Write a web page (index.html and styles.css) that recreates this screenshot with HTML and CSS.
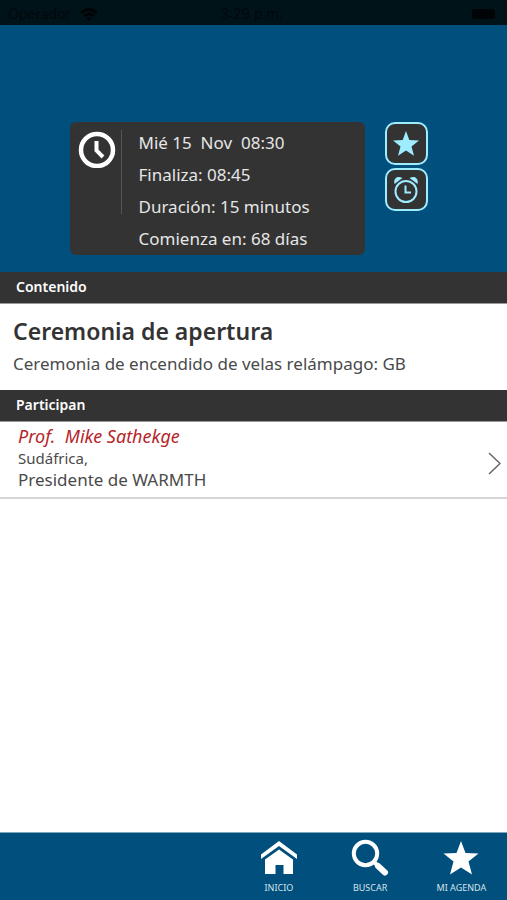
FILE: index.html
```html
<!DOCTYPE html>
<html lang="es">
<head>
  <meta charset="UTF-8">
  <meta name="viewport" content="width=device-width, initial-scale=1.0">
  <title>Ceremonia de apertura</title>
  <link rel="stylesheet" href="styles.css">
</head>
<body>

<div class="status-bar">
  <div class="carrier">
    <span>Operador</span>
    <svg width="20" height="14" viewBox="0 0 20 14" aria-hidden="true">
      <path d="M1 5 Q10 -3 19 5 L17 7 Q10 1 3 7 Z" fill="#000406"/>
      <path d="M4 8 Q10 3 16 8 L14 10 Q10 7 6 10 Z" fill="#000406"/>
      <path d="M7 11 Q10 9 13 11 L10 14 Z" fill="#000406"/>
    </svg>
  </div>
  <span>3:29 p.m.</span>
  <div class="battery-side"><div class="battery"></div></div>
</div>

<header class="hero">
  <div class="time-card">
    <div class="clock">
      <svg width="38" height="38" viewBox="0 0 38 38" aria-hidden="true">
        <circle cx="19" cy="20" r="16" fill="none" stroke="#fff" stroke-width="4.500"/>
        <path d="M18.500 11 V20.500 L25 27" fill="none" stroke="#fff" stroke-width="4"/>
      </svg>
    </div>
    <div class="time-info">
      <p>Mié 15&nbsp; Nov&nbsp; 08:30</p>
      <p>Finaliza: 08:45</p>
      <p>Duración: 15 minutos</p>
      <p>Comienza en: 68 días</p>
    </div>
  </div>
  <div class="actions">
    <button type="button" aria-label="Favorito">
      <svg width="26" height="26" viewBox="0 0 26 26" aria-hidden="true">
        <path d="M13 0 L16.300 9 L26 9.400 L18.500 15.500 L21 24.700 L13 19.500 L5 24.700 L7.500 15.500 L0 9.400 L9.700 9 Z" fill="#9eecff"/>
      </svg>
    </button>
    <button type="button" aria-label="Alarma">
      <svg width="26" height="28" viewBox="0 0 26 28" aria-hidden="true">
        <circle cx="13" cy="15.500" r="10.500" fill="none" stroke="#9eecff" stroke-width="2"/>
        <path d="M12.500 9.500 V16.500 H18" fill="none" stroke="#9eecff" stroke-width="2"/>
        <path d="M1.500 8 C0 2.500 4.500 -1 9.500 2 Z M24.500 8 C26 2.500 21.500 -1 16.500 2 Z" fill="#9eecff"/>
      </svg>
    </button>
  </div>
</header>

<main>
  <h2 class="section-title">Contenido</h2>
  <div class="content">
    <h1>Ceremonia de apertura</h1>
    <p>Ceremonia de encendido de velas relámpago: GB</p>
  </div>

  <h2 class="section-title">Participan</h2>
  <a class="person" href="#">
    <div>
      <p class="name">Prof.&nbsp; Mike Sathekge</p>
      <p class="country">Sudáfrica,</p>
      <p class="role">Presidente de WARMTH</p>
    </div>
    <svg class="chevron" width="13" height="24" viewBox="0 0 13 24" aria-hidden="true">
      <path d="M1 2 L12 12.500 L1 23" fill="none" stroke="#666" stroke-width="1.500"/>
    </svg>
  </a>
</main>

<nav class="tab-bar">
  <a href="#">
    <svg width="38" height="38" viewBox="0 0 38 38" aria-hidden="true">
      <path d="M1 20 V15.500 L19 2 L37 15.500 V20 L19 7 Z" fill="#fff"/>
      <path d="M5 20.500 L19 10.500 L33 20.500 V35 H23.500 V26 H15.500 V35 H5 Z" fill="#fff"/>
    </svg>
    <span>INICIO</span>
  </a>
  <a href="#">
    <svg width="38" height="38" viewBox="0 0 38 38" aria-hidden="true">
      <circle cx="14.500" cy="14.500" r="11.700" fill="none" stroke="#fff" stroke-width="4"/>
      <path d="M22.500 22.500 L27 27" stroke="#fff" stroke-width="4"/>
      <path d="M27 27 L34 33.500" stroke="#fff" stroke-width="6" stroke-linecap="round"/>
    </svg>
    <span>BUSCAR</span>
  </a>
  <a href="#">
    <svg width="38" height="38" viewBox="0 0 38 38" aria-hidden="true">
      <path d="M19 2 L23.500 14 L36.500 14.500 L26.500 22.500 L30 35.500 L19 28.500 L8 35.500 L11.500 22.500 L1.500 14.500 L14.500 14 Z" fill="#fff"/>
    </svg>
    <span>MI AGENDA</span>
  </a>
</nav>

</body>
</html>
```
FILE: styles.css
```css
* {
  box-sizing: border-box;
}
body {
  margin: 0;
  min-height: 100vh;
  display: flex;
  flex-direction: column;
  font-family: "Noto Sans", "Open Sans", sans-serif;
  background-color: #fff;
  color: #4a4a4a;
}
p, h1, h2 {
  margin: 0;
}
svg {
  display: block;
}
.status-bar {
  display: grid;
  grid-template-columns: 1fr auto 1fr;
  align-items: center;
  height: 25px;
  padding: 2px 12px 0 8px;
  background-color: #001318;
  color: #00080b;
  font-family: Inter, sans-serif;
  font-size: 14px;
}
.carrier {
  display: flex;
  align-items: center;
  gap: 8px;
}
.battery-side {
  display: flex;
  justify-content: flex-end;
}
.battery {
  width: 23px;
  height: 10px;
  border-radius: 3px;
  background-color: #000406;
}
.hero {
  display: flex;
  justify-content: center;
  align-items: flex-start;
  gap: 20px;
  padding: 97px 10px 17px 0;
  background-color: #004f7c;
}
.time-card {
  display: flex;
  flex: 0 1 295px;
  padding: 0 8px;
  border-radius: 6px;
  background-color: #333;
}
.clock {
  height: 84px;
  margin-top: 8px;
  padding-right: 5px;
  border-right: 1px solid #555;
}
.time-info {
  padding: 5px 0 0 17px;
  color: #e6e6e6;
  font-size: 17px;
  line-height: 32px;
  white-space: nowrap;
}
.actions {
  display: flex;
  flex-direction: column;
  gap: 3px;
}
.actions button {
  display: flex;
  align-items: center;
  justify-content: center;
  width: 43px;
  height: 43px;
  padding: 0;
  border: 2px solid #9eecff;
  border-radius: 10px;
  background-color: #333;
}
.section-title {
  height: 32px;
  padding-left: 16px;
  border-bottom: 1px solid #999;
  background-color: #333;
  color: #fff;
  font-size: 14px;
  font-weight: 600;
  line-height: 29px;
}
.content {
  padding: 11px 13px 9px;
}
.content h1 {
  color: #333;
  font-size: 23px;
  font-weight: 600;
  line-height: 32px;
}
.content p {
  font-size: 17px;
  line-height: 34px;
}
.person {
  display: flex;
  align-items: center;
  justify-content: space-between;
  padding: 2px 6px 5px 18px;
  border-bottom: 2px solid #d5d5d5;
  color: #4a4a4a;
  text-decoration: none;
}
.person .name {
  color: #b5262b;
  font-size: 18px;
  font-style: italic;
  line-height: 24px;
}
.person .country {
  font-size: 15px;
  line-height: 20px;
}
.person .role {
  font-size: 17px;
  line-height: 24px;
}
.chevron {
  margin-top: 10px;
}
.tab-bar {
  display: flex;
  justify-content: flex-end;
  margin-top: auto;
  height: 68px;
  padding-top: 6px;
  border-top: 1px solid #7fa7bd;
  background-color: #004f7c;
}
.tab-bar a {
  display: flex;
  flex-direction: column;
  align-items: center;
  width: 18%;
  color: #d5e4ec;
  font-size: 9px;
  line-height: 22px;
  text-decoration: none;
}
```
